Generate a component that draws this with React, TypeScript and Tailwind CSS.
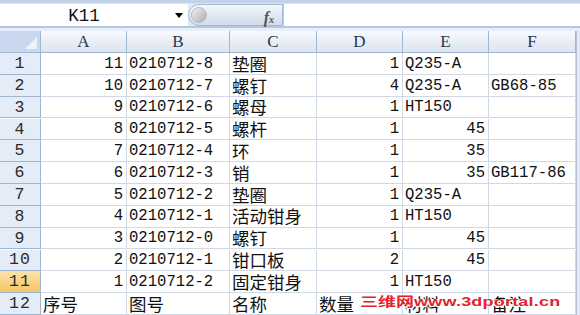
import React from 'react';

// 表格数据（明细栏）
const rows: string[][] = [
  ['11', '0210712-8', '垫圈', '1', 'Q235-A', ''],
  ['10', '0210712-7', '螺钉', '4', 'Q235-A', 'GB68-85'],
  ['9', '0210712-6', '螺母', '1', 'HT150', ''],
  ['8', '0210712-5', '螺杆', '1', '45', ''],
  ['7', '0210712-4', '环', '1', '35', ''],
  ['6', '0210712-3', '销', '1', '35', 'GB117-86'],
  ['5', '0210712-2', '垫圈', '1', 'Q235-A', ''],
  ['4', '0210712-1', '活动钳身', '1', 'HT150', ''],
  ['3', '0210712-0', '螺钉', '1', '45', ''],
  ['2', '0210712-1', '钳口板', '2', '45', ''],
  ['1', '0210712-2', '固定钳身', '1', 'HT150', ''],
  ['序号', '图号', '名称', '数量', '材料', '备注'],
];

const cols = ['A', 'B', 'C', 'D', 'E', 'F'];

const isNum = (s: string) => /^\d+$/.test(s);
const isCjk = (s: string) => /[\u4e00-\u9fff]/.test(s);

function Cell({ value }: { value: string }) {
  const num = isNum(value);
  const cjk = isCjk(value);
  return (
    <div
      className={
        'h-[21.6px] border-r border-b border-[#d0d7e5] flex items-center overflow-visible whitespace-nowrap text-[#111] ' +
        (num ? 'justify-end pr-[3px] ' : 'justify-start pl-[2px] ') +
        (cjk
          ? "font-['Noto_Sans_CJK_SC',sans-serif] text-[17.5px] leading-none"
          : "font-['Liberation_Mono',monospace] text-[15.6px] leading-none pt-[2px]")
      }
    >
      {value}
    </div>
  );
}

export default function App() {
  return (
    <div className="relative w-[580px] h-[315px] overflow-hidden bg-white">
      {/* 编辑栏 */}
      <div className="h-[31px] bg-[#dfe8f5] flex flex-col">
        <div className="h-[4px] bg-[#c2d3e9] border-b border-[#d9e4f2]" />
        <div className="h-[22px] flex items-stretch">
          <div className="w-[188px] bg-white flex items-center relative">
            <span className="w-[168px] text-center font-['Liberation_Mono',monospace] text-[17.5px] text-[#111] pt-[2px]">
              K11
            </span>
            <span className="absolute left-[175px] top-[9px] w-0 h-0 border-l-[4px] border-r-[4px] border-t-[5px] border-l-transparent border-r-transparent border-t-black" />
          </div>
          <div className="w-[95px] rounded-l-full bg-gradient-to-b from-[#f4f7fc] to-[#cfdbec] border border-[#a6bad5] flex items-center relative">
            <span className="ml-[2px] w-[16px] h-[16px] rounded-full bg-gradient-to-br from-[#f2f2f2] to-[#a9adb3] border border-[#b7bcc4]" />
            <span className="absolute right-[8px] top-[1px] font-['Liberation_Serif',serif] italic text-[16px] text-[#555] font-bold">
              f<span className="text-[10px]">x</span>
            </span>
          </div>
          <div className="flex-1 bg-white border-l border-[#b8c9df]" />
        </div>
        <div className="h-[5px] border-t-2 border-[#b5c7de] bg-[#e9eff8]" />
      </div>

      {/* 工作表 */}
      <div className="flex">
        <div className="grid grid-cols-[41px_86px_103px_87px_86px_86px_87px]">
          {/* 左上角全选 */}
          <div className="h-[22px] bg-[#c9d8ee] border-r border-b border-[#9eb6ce] relative">
            <span className="absolute right-[3px] bottom-[3px] w-0 h-0 border-l-[12px] border-t-[12px] border-l-transparent border-t-transparent border-b-0 border-r-0 [border-bottom:12px_solid_#eef3fa]" />
          </div>
          {cols.map((c) => (
            <div
              key={c}
              className="h-[22px] bg-gradient-to-b from-[#f7f9fd] to-[#dbe4f0] border-r border-b border-[#9eb6ce] flex items-center justify-center font-['Liberation_Serif',serif] text-[17px] text-[#27384d]"
            >
              {c}
            </div>
          ))}
          {rows.map((r, i) => (
            <React.Fragment key={i}>
              <div
                className={
                  "h-[21.6px] border-r border-b border-[#9eb6ce] flex items-center justify-center font-['Liberation_Mono',monospace] text-[16.5px] tracking-[1px] text-[#2b2b2b] pt-[2px] " +
                  (i === 10
                    ? 'bg-gradient-to-b from-[#fbe3a8] to-[#f5c565]'
                    : 'bg-[#e4ecf7]')
                }
              >
                {i + 1}
              </div>
              {r.map((v, j) => (
                <Cell key={j} value={v} />
              ))}
            </React.Fragment>
          ))}
        </div>
        <div className="flex-1 h-[284px] bg-[#e3e9f1] border-l border-[#b5c4d6]" />
      </div>

      {/* 水印 */}
      <div className="absolute left-[360px] top-[290px] origin-left scale-y-[0.7] whitespace-nowrap font-bold text-[#e3222c] [text-shadow:1px_1px_0_#fff,-1px_-1px_0_#fff,1px_-1px_0_#fff,-1px_1px_0_#fff,0_1px_0_#fff,0_-1px_0_#fff,1px_0_0_#fff,-1px_0_0_#fff]">
        <span className="font-['Noto_Sans_CJK_SC',sans-serif] text-[18px] leading-none">三维网</span>
        <span className="font-['Liberation_Sans',sans-serif] text-[18px] leading-none tracking-[0.2px]">www.3dportal.cn</span>
      </div>
    </div>
  );
}
